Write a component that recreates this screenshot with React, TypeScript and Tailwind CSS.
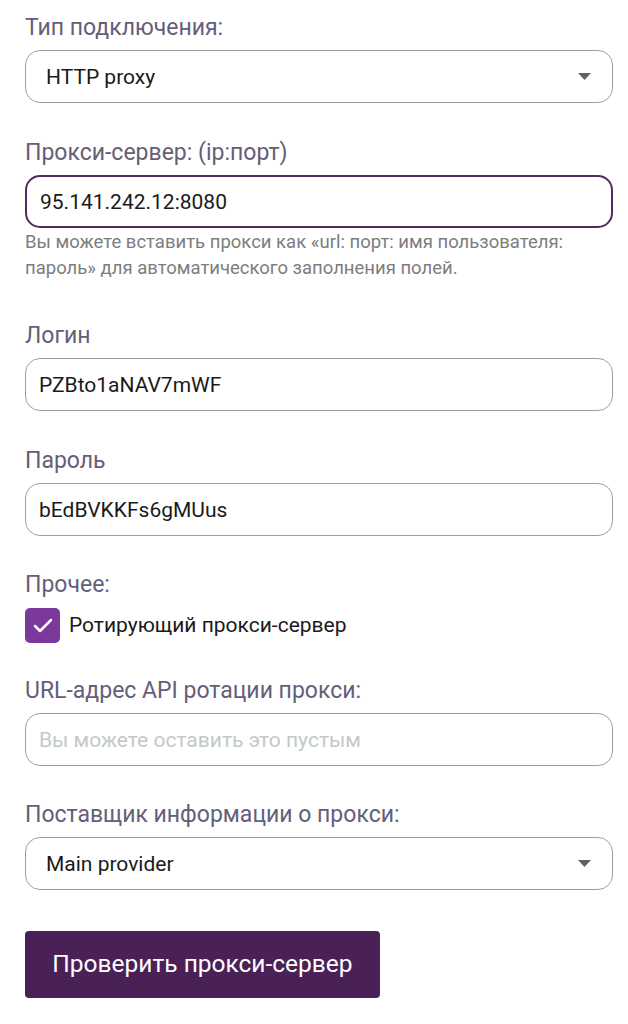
import { Check } from "lucide-react";

const font = { fontFamily: "Roboto, 'Noto Sans', sans-serif" };

const Label = ({ children }: { children: React.ReactNode }) => (
  <div className="text-[23px] leading-[24px] text-[#655e78]">{children}</div>
);

const Caret = () => (
  <svg width="13" height="7" viewBox="0 0 13 7" className="shrink-0">
    <path d="M0 0h13L6.5 7z" fill="#616161" />
  </svg>
);

const SelectBox = ({ value }: { value: string }) => (
  <div className="mt-[10px] h-[53px] rounded-[15px] border-[1.5px] border-[#9e9e9e] bg-white flex items-center justify-between pl-[20px] pr-[21px]">
    <span className="pt-[3px] text-[21px] text-[#1a1a1a]">{value}</span>
    <Caret />
  </div>
);

const TextBox = ({
  value,
  placeholder,
  focused,
}: {
  value?: string;
  placeholder?: string;
  focused?: boolean;
}) => (
  <div
    className={`mt-[10px] h-[53px] rounded-[15px] bg-white flex items-center pl-[13px] ${
      focused ? "border-[2px] border-[#4f2c60]" : "border-[1.5px] border-[#9e9e9e]"
    }`}
  >
    {value ? (
      <span className="pt-[2px] text-[21px] text-[#1a1a1a]">{value}</span>
    ) : (
      <span className="pt-[2px] text-[21px] text-[#c3c9c9]">{placeholder}</span>
    )}
  </div>
);

export default function App() {
  return (
    <div className="min-h-screen bg-white pl-[25px] pr-[15px] pt-[16px] pb-[25px]" style={font}>
      <Label>Тип подключения:</Label>
      <SelectBox value="HTTP proxy" />

      <div className="mt-[38px]">
        <Label>Прокси-сервер: (ip:порт)</Label>
        <TextBox value="95.141.242.12:8080" focused />
        <p className="mt-px text-[18.5px] leading-[26px] text-[#7d7d7d]">
          Вы можете вставить прокси как «url: порт: имя пользователя: пароль» для автоматического заполнения полей.
        </p>
      </div>

      <div className="mt-[43px]">
        <Label>Логин</Label>
        <TextBox value="PZBto1aNAV7mWF" />
      </div>

      <div className="mt-[38px]">
        <Label>Пароль</Label>
        <TextBox value="bEdBVKKFs6gMUus" />
      </div>

      <div className="mt-[37px]">
        <Label>Прочее:</Label>
        <label className="mt-[11px] flex items-center gap-[9px]">
          <span className="w-[35px] h-[35px] rounded-[5px] bg-[#7b3a9b] flex items-center justify-center">
            <Check className="w-[24px] h-[24px] text-white" strokeWidth={2.5} />
          </span>
          <span className="text-[21px] text-[#1a1a1a]">Ротирующий прокси-сервер</span>
        </label>
      </div>

      <div className="mt-[36px]">
        <Label>URL-адрес API ротации прокси:</Label>
        <TextBox placeholder="Вы можете оставить это пустым" />
      </div>

      <div className="mt-[37px]">
        <Label>Поставщик информации о прокси:</Label>
        <div className="mt-[1px]">
          <SelectBox value="Main provider" />
        </div>
      </div>

      <button className="mt-[41px] w-[355px] h-[67px] rounded-[4px] bg-[#4a2157] text-white text-[24.5px]">
        Проверить прокси-сервер
      </button>
    </div>
  );
}
